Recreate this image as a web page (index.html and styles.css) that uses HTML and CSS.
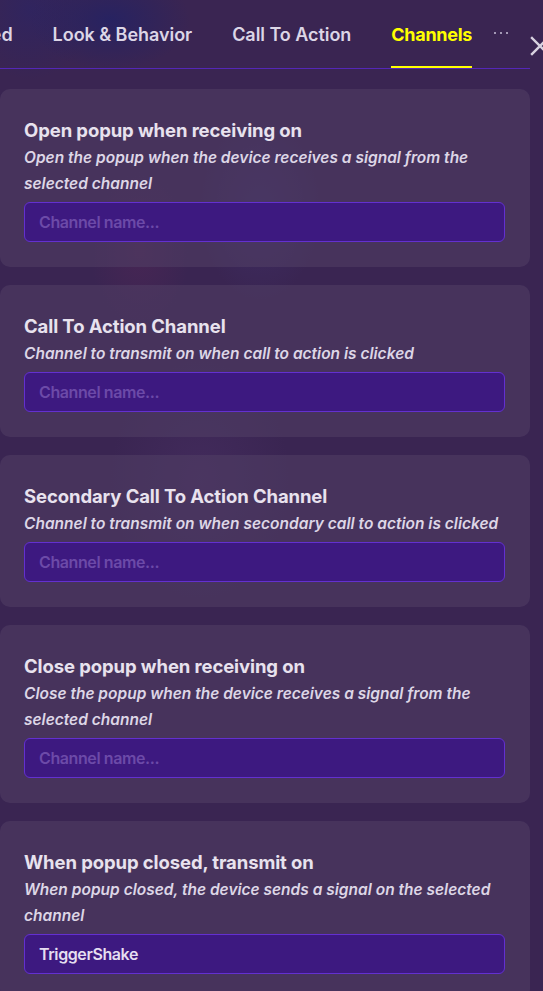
FILE: index.html
```html
<!DOCTYPE html>
<html>
<head>
<meta charset="utf-8">
<link rel="stylesheet" href="styles.css">
</head>
<body>
<div class="page">
  <div class="panel">
    <header class="header">
      <nav class="tabs">
        <div class="tab">Advanced</div>
        <div class="tab">Look &amp; Behavior</div>
        <div class="tab">Call To Action</div>
        <div class="tab active">Channels</div>
      </nav>
      <div class="more"><span></span><span></span><span></span></div>
    </header>
    <button class="close" aria-label="Close">
      <svg width="20" height="20" viewBox="0 0 20 20"><path d="M2 2 L18 18 M18 2 L2 18" stroke="#d8d2e0" stroke-width="2.4" stroke-linecap="square" fill="none"/></svg>
    </button>

    <main class="cards">
      <section class="card">
        <h2 class="title">Open popup when receiving on</h2>
        <p class="desc">Open the popup when the device receives a signal from the selected channel</p>
        <input class="field" type="text" placeholder="Channel name...">
      </section>
      <section class="card">
        <h2 class="title">Call To Action Channel</h2>
        <p class="desc">Channel to transmit on when call to action is clicked</p>
        <input class="field" type="text" placeholder="Channel name...">
      </section>
      <section class="card">
        <h2 class="title">Secondary Call To Action Channel</h2>
        <p class="desc">Channel to transmit on when secondary call to action is clicked</p>
        <input class="field" type="text" placeholder="Channel name...">
      </section>
      <section class="card">
        <h2 class="title">Close popup when receiving on</h2>
        <p class="desc">Close the popup when the device receives a signal from the selected channel</p>
        <input class="field" type="text" placeholder="Channel name...">
      </section>
      <section class="card">
        <h2 class="title">When popup closed, transmit on</h2>
        <p class="desc">When popup closed, the device sends a signal on the selected channel</p>
        <input class="field" type="text" value="TriggerShake">
      </section>
    </main>
  </div>
</div>
</body>
</html>
```

FILE: styles.css
```css
* { box-sizing: border-box; }
html, body {
  margin: 0;
  padding: 0;
  height: 100%;
  overflow: hidden;
}
body {
  font-family: Inter, "Noto Sans", sans-serif;
  background: #3a2552;
  color: #e6e0ec;
}
.page {
  width: 543px;
  height: 991px;
  overflow: hidden;
  background:
    radial-gradient(ellipse 80px 50px at 110px 20px, rgba(36,34,100,0.85), rgba(36,34,100,0) 100%),
    radial-gradient(ellipse 60px 70px at 30px 10px, rgba(44,36,100,0.7), rgba(44,36,100,0) 100%),
    radial-gradient(ellipse 60px 90px at 260px 210px, rgba(70,60,130,0.35), rgba(70,60,130,0) 100%),
    radial-gradient(ellipse 50px 80px at 140px 250px, rgba(110,40,90,0.25), rgba(110,40,90,0) 100%),
    radial-gradient(ellipse 90px 120px at 200px 480px, rgba(90,60,120,0.25), rgba(90,60,120,0) 100%),
    #3a2552;
}
.panel {
  position: relative;
  width: 530px;
}
.header {
  display: flex;
  align-items: flex-start;
  height: 69px;
  border-bottom: 1px solid #5427b8;
}
.tabs {
  width: 472px;
  display: flex;
  justify-content: flex-end;
  gap: 40px;
  overflow: hidden;
  height: 68px;
  flex: none;
}
.tab {
  position: relative;
  flex: none;
  font-size: 18px;
  font-weight: 600;
  letter-spacing: -0.05px;
  line-height: 24px;
  padding-top: 23px;
  height: 68px;
  color: #dcd6e6;
  white-space: nowrap;
}
.tab.active {
  color: #ffff00;
  font-weight: 700;
  letter-spacing: -0.3px;
}
.tab.active::after {
  content: "";
  position: absolute;
  left: 0;
  right: 0;
  bottom: -1px;
  height: 3px;
  background: #ffff00;
}
.more {
  display: flex;
  gap: 4px;
  margin-left: 22px;
  margin-top: 32px;
}
.more span {
  width: 2px;
  height: 2px;
  background: #c9c0d8;
  border-radius: 1px;
}
.close {
  position: absolute;
  left: 530px;
  top: 36px;
  width: 20px;
  height: 20px;
  padding: 0;
  border: 0;
  background: none;
}
.close svg { display: block; }
.cards {
  display: flex;
  flex-direction: column;
  gap: 18px;
  padding-top: 20px;
}
.card {
  background: rgba(80, 62, 100, 0.6);
  border-radius: 10px;
  padding: 29px 25px 25px 24px;
}
.title {
  margin: 0;
  font-size: 18.5px;
  line-height: 24px;
  font-weight: 700;
  letter-spacing: -0.1px;
  color: #e8e2ee;
}
.desc {
  margin: 3px 0 5px;
  font-size: 15.5px;
  line-height: 26px;
  font-style: italic;
  font-weight: 600;
  letter-spacing: 0;
  color: #ddd6e6;
}
.field {
  display: block;
  width: 100%;
  height: 40px;
  border: 1px solid #6330d0;
  border-radius: 6px;
  background: #3d1980;
  padding: 0 14px;
  font-family: Inter, "Noto Sans", sans-serif;
  font-size: 16px;
  font-weight: 600;
  letter-spacing: -0.4px;
  color: #e5def0;
  outline: none;
}
.field::placeholder {
  color: #6c4aa8;
}
```
